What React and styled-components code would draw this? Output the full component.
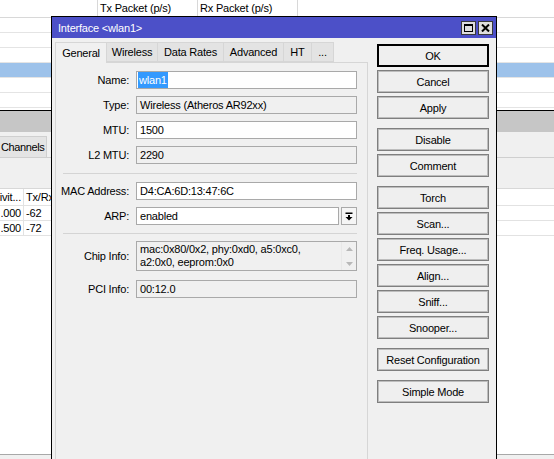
import React from 'react';
import styled, { createGlobalStyle } from 'styled-components';

const GlobalStyle = createGlobalStyle`
  html, body {
    margin: 0;
    padding: 0;
  }
  body {
    font-family: "Liberation Sans", Arial, sans-serif;
    font-size: 11px;
    letter-spacing: -0.2px;
    color: #000;
    overflow: hidden;
  }
  * { box-sizing: border-box; }
`;

const Screen = styled.div`
  position: relative;
  width: 554px;
  height: 459px;
  overflow: hidden;
  background: #fff;
`;

/* ---------- window behind the dialog ---------- */

const BackWindow = styled.div`
  display: flex;
  flex-direction: column;
  height: 100%;
`;

const ListHeader = styled.div`
  display: flex;
  height: 18px;
  border-bottom: 1px solid #d8d8d8;
  background: #fff;
`;

const HeadCell = styled.div`
  width: ${({ w }) => w}px;
  flex: ${({ grow }) => (grow ? 1 : 'none')};
  border-right: ${({ grow }) => (grow ? 'none' : '1px solid #d8d8d8')};
  padding-left: 2px;
  line-height: 17px;
  white-space: nowrap;
  overflow: hidden;
`;

const ListBody = styled.div`
  height: 92px;
  background: #fff;
`;

const ListRow = styled.div`
  height: 15px;
  border-bottom: 1px solid #e4e4e4;
  background: ${({ selected }) => (selected ? '#9dc2ea' : '#fff')};
`;

const SectionBar = styled.div`
  height: 22px;
  border-top: 1px solid #000;
  background: #c6c6c6;
`;

const TabStrip = styled.div`
  display: flex;
  align-items: flex-end;
  height: 26px;
  background: #f0f0f0;
  border-bottom: 1px solid #cfcfcf;
`;

const BackTab = styled.div`
  display: flex;
  align-items: center;
  width: 47px;
  height: 21px;
  padding: 0 0 0 1px;
  letter-spacing: -0.4px;
  white-space: nowrap;
  background: #e4e4e4;
  border: 1px solid #cfcfcf;
  border-left: none;
  border-bottom: none;
`;

const StripSpace = styled.div`
  height: 30px;
  background: #f0f0f0;
`;

const TableRow = styled.div`
  display: flex;
  height: ${({ head }) => (head ? 18 : 15)}px;
  border-top: ${({ head }) => (head ? '1px solid #d8d8d8' : 'none')};
  border-bottom: 1px solid #e2e2e2;
  background: #fff;
`;

const TableCell = styled.div`
  width: ${({ w }) => w}px;
  border-right: 1px solid #e2e2e2;
  display: flex;
  align-items: center;
  justify-content: ${({ right }) => (right ? 'flex-end' : 'flex-start')};
  padding: 0 2px;
  white-space: nowrap;
  overflow: hidden;
`;

const Fill = styled.div`
  flex: 1;
  background: #fff;
`;

const Footer = styled.div`
  height: 5px;
  border-top: 1px solid #a8a8a8;
  background: #f0f0f0;
`;

/* ---------- dialog ---------- */

const Dialog = styled.div`
  position: absolute;
  left: 51px;
  top: 16px;
  width: 446px;
  height: 443px;
  border: 1px solid #000;
  border-bottom: none;
  background: #f0f0f0;
  display: flex;
  flex-direction: column;
`;

const TitleBar = styled.div`
  display: flex;
  align-items: center;
  height: 21px;
  padding: 0 3px 0 6px;
  background: #4c50c8;
  color: #fff;
`;

const TitleText = styled.div`
  flex: 1;
`;

const TitleButton = styled.div`
  width: 15px;
  height: 14px;
  margin-left: 2px;
  background: #dedede;
  border: 1px solid #3a3a3a;
  display: flex;
  align-items: center;
  justify-content: center;
`;

const Body = styled.div`
  flex: 1;
  display: flex;
  padding: 4px 0 0 3px;
`;

const LeftPart = styled.div`
  width: 313px;
  display: flex;
  flex-direction: column;
`;

const Tabs = styled.div`
  display: flex;
  height: 20px;
  position: relative;
  z-index: 1;
`;

const Tab = styled.div`
  width: ${({ w }) => w}px;
  height: ${({ active }) => (active ? 21 : 20)}px;
  display: flex;
  align-items: center;
  justify-content: center;
  background: ${({ active }) => (active ? '#f0f0f0' : '#e3e3e3')};
  border: 1px solid #d6d6d6;
  border-left: ${({ first }) => (first ? '1px solid #d6d6d6' : 'none')};
  border-bottom: ${({ active }) => (active ? 'none' : '1px solid #d6d6d6')};
  white-space: nowrap;
`;

const Panel = styled.div`
  flex: 1;
  border: 1px solid #d6d6d6;
  border-bottom: none;
  background: #f0f0f0;
  padding: 8px 9px 0 0;
  display: flex;
  flex-direction: column;
  gap: 7px;
`;

const FieldRow = styled.div`
  display: flex;
  align-items: center;
  margin-bottom: ${({ mb }) => mb || 0}px;
`;

const Label = styled.div`
  width: 73px;
  margin-right: 7px;
  text-align: right;
  white-space: nowrap;
`;

const Field = styled.div`
  width: ${({ w }) => w || 221}px;
  height: ${({ h }) => h || 18}px;
  border: 1px solid #a9a9a9;
  background: ${({ readOnly }) => (readOnly ? '#f0f0f0' : '#fff')};
  padding-left: 3px;
  line-height: 16px;
  white-space: nowrap;
  overflow: hidden;
`;

const Selected = styled.span`
  display: inline-block;
  background: #3399ff;
  color: #fff;
  height: 16px;
  padding: 0 1px;
  margin-left: -2px;
`;

const DropButton = styled.div`
  width: 16px;
  height: 18px;
  margin-left: 2px;
  border: 1px solid #a9a9a9;
  background: #f5f5f5;
  display: flex;
  align-items: center;
  justify-content: center;
`;

const Separator = styled.div`
  height: 1px;
  margin: ${({ mt }) => mt}px 0 ${({ mb }) => mb}px 7px;
  width: 294px;
  background: #d4d4d4;
`;

const MultiField = styled.div`
  width: 221px;
  height: 30px;
  border: 1px solid #a9a9a9;
  background: #f0f0f0;
  display: flex;
`;

const MultiText = styled.div`
  flex: 1;
  padding: 1px 3px;
  line-height: 13px;
  white-space: nowrap;
  overflow: hidden;
`;

const ScrollBar = styled.div`
  width: 15px;
  display: flex;
  flex-direction: column;
  justify-content: space-between;
  align-items: center;
  padding: 5px 0 4px;
  border-left: 1px solid #e8e8e8;
`;

const RightPart = styled.div`
  width: 112px;
  margin-left: 9px;
  padding-top: 2px;
  display: flex;
  flex-direction: column;
  gap: 3px;
`;

const Button = styled.div`
  height: 23px;
  display: flex;
  align-items: center;
  justify-content: center;
  background: #efefef;
  border: 1px solid ${({ primary }) => (primary ? '#000' : '#7f7f7f')};
  box-shadow: inset 0 0 0 1px ${({ primary }) => (primary ? '#000' : '#bdbdbd')};
  margin-top: ${({ groupStart }) => (groupStart ? 6 : 0)}px;
  white-space: nowrap;
`;

const MaxIcon = () => (
  <svg width="9" height="8" viewBox="0 0 9 8">
    <rect x="0.5" y="0.5" width="8" height="7" fill="none" stroke="#000" strokeWidth="1" />
    <rect x="0" y="0" width="9" height="2" fill="#000" />
  </svg>
);

const CloseIcon = () => (
  <svg width="9" height="8" viewBox="0 0 9 8">
    <path d="M1 0.5 L8 7.5 M8 0.5 L1 7.5" stroke="#000" strokeWidth="2" />
  </svg>
);

const DropIcon = () => (
  <svg width="8" height="9" viewBox="0 0 8 9">
    <rect x="0.5" y="0.5" width="7" height="1.5" fill="#000" />
    <rect x="3" y="3" width="2" height="2.5" fill="#000" />
    <path d="M0.5 5 H7.5 L4 8.5 Z" fill="#000" />
  </svg>
);

const ScrollArrow = ({ down }) => (
  <svg width="7" height="4" viewBox="0 0 7 4">
    <path d={down ? 'M0 0 H7 L3.5 4 Z' : 'M0 4 H7 L3.5 0 Z'} fill="#b8b8b8" />
  </svg>
);

const tabs = [
  { name: 'General', w: 52, active: true },
  { name: 'Wireless', w: 51 },
  { name: 'Data Rates', w: 66 },
  { name: 'Advanced', w: 60 },
  { name: 'HT', w: 28 },
  { name: '...', w: 22 },
];

const buttons = [
  { name: 'OK', primary: true },
  { name: 'Cancel' },
  { name: 'Apply' },
  { name: 'Disable', groupStart: true },
  { name: 'Comment' },
  { name: 'Torch', groupStart: true },
  { name: 'Scan...' },
  { name: 'Freq. Usage...' },
  { name: 'Align...' },
  { name: 'Sniff...' },
  { name: 'Snooper...' },
  { name: 'Reset Configuration', groupStart: true },
  { name: 'Simple Mode', groupStart: true },
];

export default function App() {
  return (
    <Screen>
      <GlobalStyle />
      <BackWindow>
        <ListHeader>
          <HeadCell w={98}></HeadCell>
          <HeadCell w={100}>Tx Packet (p/s)</HeadCell>
          <HeadCell w={100}>Rx Packet (p/s)</HeadCell>
          <HeadCell grow></HeadCell>
        </ListHeader>
        <ListBody>
          {[0, 1, 2, 3, 4, 5].map(i => (
            <ListRow key={i} selected={i === 3} />
          ))}
        </ListBody>
        <SectionBar />
        <TabStrip>
          <BackTab>Channels</BackTab>
        </TabStrip>
        <StripSpace />
        <TableRow head>
          <TableCell w={24} right>ivit...</TableCell>
          <TableCell w={60}>Tx/Rx</TableCell>
        </TableRow>
        <TableRow>
          <TableCell w={24} right>.000</TableCell>
          <TableCell w={60}>-62</TableCell>
        </TableRow>
        <TableRow>
          <TableCell w={24} right>.500</TableCell>
          <TableCell w={60}>-72</TableCell>
        </TableRow>
        <Fill />
        <Footer />
      </BackWindow>

      <Dialog>
        <TitleBar>
          <TitleText>Interface &lt;wlan1&gt;</TitleText>
          <TitleButton><MaxIcon /></TitleButton>
          <TitleButton><CloseIcon /></TitleButton>
        </TitleBar>
        <Body>
          <LeftPart>
            <Tabs>
              {tabs.map((t, i) => (
                <Tab key={t.name} w={t.w} active={t.active} first={i === 0}>{t.name}</Tab>
              ))}
            </Tabs>
            <Panel>
              <FieldRow>
                <Label>Name:</Label>
                <Field><Selected>wlan1</Selected></Field>
              </FieldRow>
              <FieldRow>
                <Label>Type:</Label>
                <Field readOnly>Wireless (Atheros AR92xx)</Field>
              </FieldRow>
              <FieldRow>
                <Label>MTU:</Label>
                <Field>1500</Field>
              </FieldRow>
              <FieldRow>
                <Label>L2 MTU:</Label>
                <Field readOnly>2290</Field>
              </FieldRow>
              <Separator mt={2} mb={1} />
              <FieldRow>
                <Label>MAC Address:</Label>
                <Field>D4:CA:6D:13:47:6C</Field>
              </FieldRow>
              <FieldRow>
                <Label>ARP:</Label>
                <Field w={203}>enabled</Field>
                <DropButton><DropIcon /></DropButton>
              </FieldRow>
              <Separator mt={1} mb={0} />
              <FieldRow mb={2}>
                <Label>Chip Info:</Label>
                <MultiField>
                  <MultiText>
                    mac:0x80/0x2, phy:0xd0, a5:0xc0,<br />
                    a2:0x0, eeprom:0x0
                  </MultiText>
                  <ScrollBar>
                    <ScrollArrow />
                    <ScrollArrow down />
                  </ScrollBar>
                </MultiField>
              </FieldRow>
              <FieldRow>
                <Label>PCI Info:</Label>
                <Field readOnly>00:12.0</Field>
              </FieldRow>
            </Panel>
          </LeftPart>
          <RightPart>
            {buttons.map(b => (
              <Button key={b.name} primary={b.primary} groupStart={b.groupStart}>{b.name}</Button>
            ))}
          </RightPart>
        </Body>
      </Dialog>
    </Screen>
  );
}
